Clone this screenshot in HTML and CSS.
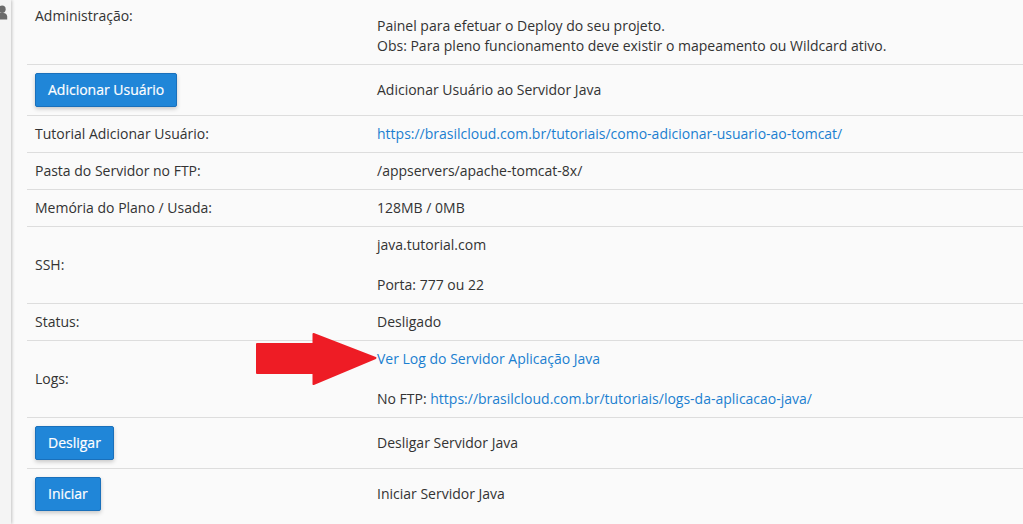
FILE: index.html
```html
<!DOCTYPE html>
<html lang="pt-BR">
<head>
<meta charset="utf-8">
<title>Servidor Java</title>
<link rel="stylesheet" href="styles.css">
</head>
<body>
<div class="layout">
  <aside class="sidebar">
    <svg class="user-icon" viewBox="0 0 11 15" aria-hidden="true"><circle cx="2" cy="4.300" r="3.700"/><path d="M-3 14.500v-2.900C-3 9.500-1.500 8 .5 8h3c2 0 3.700 1.500 3.700 3.600v2.900z"/></svg>
  </aside>
  <main class="content">
    <div class="row row-admin">
      <div class="label label-top">Administração:</div>
      <div class="value value-admin">Painel para efetuar o Deploy do seu projeto.<br>Obs: Para pleno funcionamento deve existir o mapeamento ou Wildcard ativo.</div>
    </div>
    <div class="row">
      <div class="label"><button class="btn">Adicionar Usuário</button></div>
      <div class="value">Adicionar Usuário ao Servidor Java</div>
    </div>
    <div class="row">
      <div class="label">Tutorial Adicionar Usuário:</div>
      <div class="value"><a href="#">https://brasilcloud.com.br/tutoriais/como-adicionar-usuario-ao-tomcat/</a></div>
    </div>
    <div class="row">
      <div class="label">Pasta do Servidor no FTP:</div>
      <div class="value">/appservers/apache-tomcat-8x/</div>
    </div>
    <div class="row">
      <div class="label">Memória do Plano / Usada:</div>
      <div class="value">128MB / 0MB</div>
    </div>
    <div class="row">
      <div class="label">SSH:</div>
      <div class="value"><p>java.tutorial.com</p><p>Porta: 777 ou 22</p></div>
    </div>
    <div class="row">
      <div class="label">Status:</div>
      <div class="value">Desligado</div>
    </div>
    <div class="row">
      <div class="label">Logs:</div>
      <div class="value"><p><a href="#">Ver Log do Servidor Aplicação Java</a></p><p>No FTP: <a href="#">https://brasilcloud.com.br/tutoriais/logs-da-aplicacao-java/</a></p></div>
    </div>
    <div class="row">
      <div class="label"><button class="btn">Desligar</button></div>
      <div class="value">Desligar Servidor Java</div>
    </div>
    <div class="row row-last">
      <div class="label"><button class="btn">Iniciar</button></div>
      <div class="value">Iniciar Servidor Java</div>
    </div>
  </main>
</div>
<svg class="arrow" viewBox="0 0 122 54" aria-hidden="true"><path d="M2 12H58.500V2L120.500 26 58.500 52V41H2z" fill="#ee1c25" stroke="#ee1c25" stroke-width="2" stroke-linejoin="round"/></svg>
</body>
</html>
```
FILE: styles.css
```css
html, body {
  margin: 0;
  height: 100%;
  overflow: hidden;
  background: #fafafa;
}
body {
  font-family: "Open Sans", "Noto Sans", sans-serif;
  font-size: 14px;
  line-height: 20px;
  color: #333;
  position: relative;
}
.layout {
  display: flex;
  height: 524px;
}
.sidebar {
  width: 11px;
  flex: none;
  background: #f4f4f4;
  box-shadow: 1px 0 3px rgba(0, 0, 0, .22);
  overflow: hidden;
}
.user-icon {
  display: block;
  width: 11px;
  height: 15px;
  margin-top: 5px;
  fill: #6b6b6b;
}
.content {
  flex: 1;
  min-width: 0;
  padding-left: 16px;
}
.row {
  display: grid;
  grid-template-columns: 334px 1fr;
  column-gap: 8px;
  align-items: center;
  border-bottom: 1px solid #ddd;
  padding: 8px;
}
.row-admin {
  box-sizing: border-box;
  padding: 0 8px;
  height: 65px;
}
.row-last {
  border-bottom: 0;
}
.label-top {
  align-self: start;
  padding-top: 6px;
}
.value-admin {
  align-self: start;
  padding-top: 16px;
}
.value p {
  margin: 0 0 20px;
}
.value p:last-child {
  margin-bottom: 0;
}
a {
  color: #1b7fd0;
  text-decoration: none;
}
.btn {
  display: block;
  height: 34px;
  padding: 0 12px;
  font: 500 14px/20px "Open Sans", "Noto Sans", sans-serif;
  -webkit-text-stroke: .2px #fff;
  color: #fff;
  background: #2086d8;
  border: 1px solid #1a70bb;
  border-radius: 2px;
  box-shadow: 0 2px 4px rgba(0, 0, 0, .2);
}
.arrow {
  position: absolute;
  left: 255px;
  top: 332px;
  width: 122px;
  height: 54px;
}
```
